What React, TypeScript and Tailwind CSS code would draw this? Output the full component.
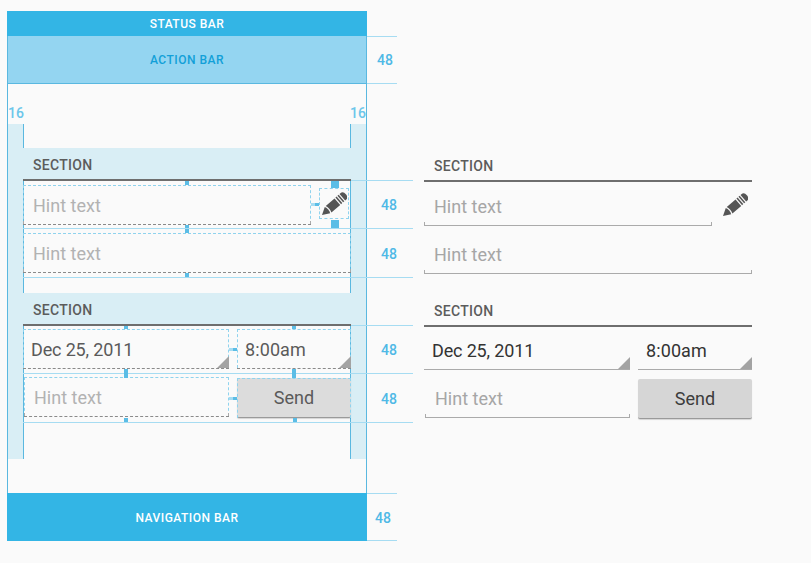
import type { ReactNode } from 'react';

const guides = [
  'left-[367px] top-[36px] w-[30px]',
  'left-[367px] top-[83px] w-[30px]',
  'left-[351px] top-[180px] w-[62px]',
  'left-[23px] top-[228px] w-[390px]',
  'left-[23px] top-[277px] w-[390px]',
  'left-[351px] top-[325px] w-[62px]',
  'left-[23px] top-[373px] w-[390px]',
  'left-[23px] top-[422px] w-[390px]',
  'left-[367px] top-[493px] w-[30px]',
  'left-[367px] top-[540px] w-[30px]',
];

const marks = [
  'left-[185px] top-[181px] w-[4px] h-[4px]',
  'left-[185px] top-[225px] w-[4px] h-[3px]',
  'left-[185px] top-[229px] w-[4px] h-[4px]',
  'left-[185px] top-[273px] w-[4px] h-[4px]',
  'left-[331px] top-[181px] w-[8px] h-[7px]',
  'left-[331px] top-[220px] w-[8px] h-[8px]',
  'left-[315px] top-[203px] w-[4px] h-[3px]',
  'left-[124px] top-[326px] w-[4px] h-[3px]',
  'left-[292px] top-[326px] w-[4px] h-[3px]',
  'left-[124px] top-[369px] w-[4px] h-[9px]',
  'left-[292px] top-[369px] w-[4px] h-[9px]',
  'left-[124px] top-[418px] w-[4px] h-[4px]',
  'left-[293px] top-[418px] w-[4px] h-[4px]',
  'left-[233px] top-[348px] w-[4px] h-[3px]',
  'left-[233px] top-[397px] w-[4px] h-[3px]',
];

const lightMarks = [
  'left-[311px] top-[203px] w-[4px] h-[3px]',
  'left-[229px] top-[348px] w-[4px] h-[3px]',
  'left-[229px] top-[397px] w-[4px] h-[3px]',
];

function Pencil() {
  return (
    <svg viewBox="0 0 26 24" className="h-[24px] w-[26px]" fill="#555555">
      <g transform="translate(1 23) rotate(-41) scale(0.97 0.9)">
        <path d="M0 0 L7.5 -4.6 Q9.5 0 7.5 4.6 Z" />
        <path d="M9 -4.8 H21 V4.8 H9 Q10.8 0 9 -4.8 Z" />
        <rect x="22.2" y="-4.8" width="1.6" height="9.6" />
        <rect x="25" y="-4.8" width="1.6" height="9.6" />
        <path d="M27.8 -4.8 H29 Q32.6 -4.8 32.6 0 Q32.6 4.8 29 4.8 H27.8 Z" />
      </g>
    </svg>
  );
}

function Section({ annotated }: { annotated?: boolean }) {
  return (
    <div
      className={`flex h-[33px] items-end border-b-2 border-[#6e6e6e] pb-[5px] pl-[10px] text-[14px] font-medium leading-[18px] tracking-[0.3px] text-[#5c5c5c] ${
        annotated ? 'bg-[#d9eef5]' : ''
      }`}
    >
      SECTION
    </div>
  );
}

function Field({
  annotated,
  className = '',
  children,
}: {
  annotated?: boolean;
  className?: string;
  children: ReactNode;
}) {
  return (
    <div
      className={`relative flex h-[40px] items-center border-b text-[18px] ${
        annotated ? 'border-dashed border-[#8a8a8a]' : 'border-[#aaaaaa]'
      } ${className}`}
    >
      {annotated && <div className="absolute inset-x-0 top-0 bottom-0 border-x border-t border-dashed border-[#8fd3ee]" />}
      {children}
    </div>
  );
}

function Ticks() {
  return (
    <>
      <div className="absolute bottom-0 left-0 h-[3px] w-px bg-[#aaaaaa]" />
      <div className="absolute bottom-0 right-0 h-[3px] w-px bg-[#aaaaaa]" />
    </>
  );
}

function Hint({ annotated, className = 'top-[1px]' }: { annotated?: boolean; className?: string }) {
  return <span className={`relative ${annotated ? 'text-[#b2b2b2]' : 'text-[#a6a6a6]'} ${className}`}>Hint text</span>;
}

function Spinner({
  annotated,
  value,
  className = '',
  textClass = '',
}: {
  annotated?: boolean;
  value: string;
  className?: string;
  textClass?: string;
}) {
  return (
    <Field annotated={annotated} className={`pl-[8px] ${annotated ? 'text-[#5a5a5a]' : 'border-[#8c8c8c] text-[#333333]'} ${className}`}>
      <span className={`relative top-[1px] ${textClass}`}>{value}</span>
      <div className="absolute bottom-0 right-0 h-0 w-0 border-b-[12px] border-l-[12px] border-b-[#a3a3a3] border-l-transparent" />
    </Field>
  );
}

function Form({ annotated }: { annotated?: boolean }) {
  return (
    <div className="w-[328px]">
      <Section annotated={annotated} />
      <div className="flex h-[48px] items-center pb-[1px]">
        <Field annotated={annotated} className="w-[288px] pl-[10px]">
          <Ticks />
          <Hint annotated={annotated} />
        </Field>
        <div className="relative -mt-[2px] ml-[8px] flex h-[31px] w-[30px] items-center justify-center">
          {annotated && <div className="absolute inset-0 border border-dashed border-[#8fd3ee]" />}
          <Pencil />
        </div>
      </div>
      <div className="flex h-[48px] items-center">
        <Field annotated={annotated} className="w-full pl-[10px]">
          <Ticks />
          <Hint annotated={annotated} />
        </Field>
      </div>
      <div className="h-[16px]" />
      <Section annotated={annotated} />
      <div className="flex h-[48px] items-center gap-[8px] pb-[2px]">
        <Spinner annotated={annotated} value="Dec 25, 2011" className="w-[206px]" textClass="tracking-[-0.15px]" />
        <Spinner annotated={annotated} value="8:00am" className="w-[114px]" textClass="tracking-[0.1px]" />
      </div>
      <div className="flex h-[48px] items-center gap-[8px] pb-[2px]">
        <Field annotated={annotated} className="ml-[1px] w-[205px] pl-[10px]">
          <Ticks />
          <Hint annotated={annotated} className="top-[1px]" />
        </Field>
        <button
          className={`relative mt-[1px] flex h-[40px] w-[114px] items-center justify-center rounded-[2px] border-b border-[#9a9a9a] pt-[1px] text-[18px] shadow-[0_1px_1px_rgba(0,0,0,0.15)] ${
            annotated ? 'bg-[#dcdcdc] text-[#5a5a5a]' : 'bg-[#d6d6d6] text-[#3c3c3c]'
          }`}
        >
          {annotated && <div className="absolute inset-x-0 top-0 -bottom-[1px] border-x border-t border-dashed border-[#8fd3ee]" />}
          Send
        </button>
      </div>
    </div>
  );
}

function Size({ className }: { className: string }) {
  return <div className={`absolute text-[14px] font-medium leading-[16px] text-[#4fb9e6] ${className}`}>48</div>;
}

export default function App() {
  return (
    <div className="relative flex h-[563px] w-[811px] bg-[#fafafa] pl-[7px] pt-[11px] font-['Roboto',sans-serif]">
      <div className="flex h-[530px] w-[360px] flex-col">
        <div className="flex h-[25px] items-center justify-center bg-[#33b5e5] pt-[1px] text-[12px] font-medium tracking-[0.5px] text-white">
          STATUS BAR
        </div>
        <div className="relative flex flex-1 flex-col border-x border-[#5ab8e0]">
          <div className="flex h-[48px] items-center justify-center border-b border-[#5ab8e0] bg-[#94d5f1] text-[12px] font-medium tracking-[0.5px] text-[#12a0d8]">
            ACTION BAR
          </div>
          <div className="absolute left-0 top-[88px] h-[335px] w-[16px] border-r border-[#5ab8e0] bg-[#d9eef5]" />
          <div className="absolute right-0 top-[88px] h-[335px] w-[16px] border-l border-[#5ab8e0] bg-[#d9eef5]" />
          <div className="absolute left-0 top-[68px] w-[16px] text-center text-[14px] font-medium leading-[18px] text-[#6cc6ea]">16</div>
          <div className="absolute right-0 top-[68px] w-[16px] text-center text-[14px] font-medium leading-[18px] text-[#6cc6ea]">16</div>
          <div className="relative px-[15px] pt-[64px]">
            <Form annotated />
          </div>
        </div>
        <div className="flex h-[48px] items-center justify-center bg-[#33b5e5] pt-[2px] text-[12px] font-medium tracking-[0.5px] text-white">
          NAVIGATION BAR
        </div>
      </div>

      <div className="ml-[57px] pt-[138px]">
        <Form />
      </div>

      {guides.map((g) => (
        <div key={g} className={`absolute h-px bg-[#a6dcf2] ${g}`} />
      ))}
      {marks.map((m) => (
        <div key={m} className={`absolute bg-[#5bbde6] ${m}`} />
      ))}
      {lightMarks.map((m) => (
        <div key={m} className={`absolute bg-[#a6dcf2] ${m}`} />
      ))}
      <Size className="left-[377px] top-[52px]" />
      <Size className="left-[381px] top-[197px]" />
      <Size className="left-[381px] top-[246px]" />
      <Size className="left-[381px] top-[342px]" />
      <Size className="left-[381px] top-[391px]" />
      <Size className="left-[375px] top-[510px]" />
    </div>
  );
}
